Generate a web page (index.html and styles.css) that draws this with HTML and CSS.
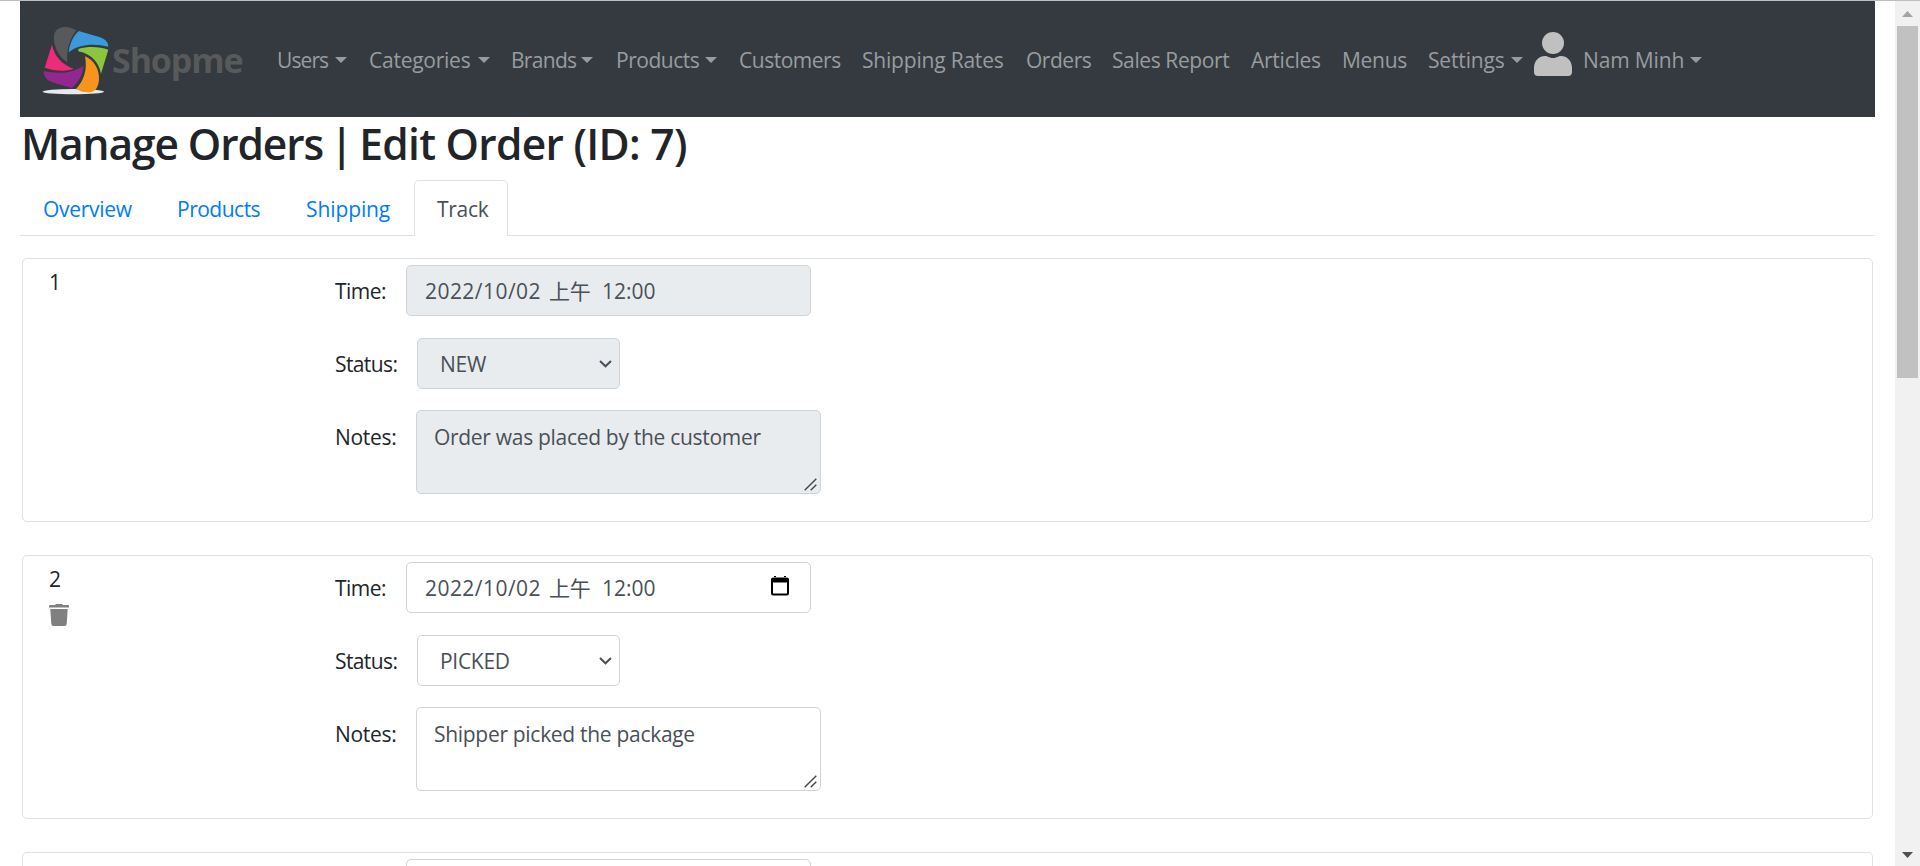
FILE: index.html
```html
<!DOCTYPE html>
<html lang="en">
<head>
<meta charset="utf-8">
<title>Manage Orders | Edit Order (ID: 7)</title>
<link rel="stylesheet" href="styles.css">
</head>
<body>
<div class="window">
<main class="page">
  <nav class="navbar">
    <a class="brand">
      <svg class="logo" viewBox="120 75 210 215" width="70" height="71.67">
        <ellipse cx="220" cy="275" rx="92" ry="8" fill="#e9e9eb"/>
        <path d="M229 91C208 80 192 78 178 85C158 94 160 116 165 136C171 158 183 174 202 187C199 151 207 120 229 91Z" fill="#58595b"/>
        <path d="M236 93L300 112C317 118 325 127 325 140C284 130 238 131 206 157C209 132 218 110 236 93Z" fill="#3b9ad9"/>
        <path d="M235 147C262 139 297 139 325 149L303 221C296 188 277 163 235 154Z" fill="#8cc63f"/>
        <path d="M255 169C282 180 299 208 297 240C294 269 281 278 263 277C250 277 238 273 228 267C251 243 263 211 255 169Z" fill="#f7941e"/>
        <path d="M250 197C250 222 237 244 216 264L161 248C139 241 131 230 131 213C178 223 219 219 250 197Z" fill="#92278f"/>
        <path d="M156 134C164 170 185 193 221 206C195 216 164 213 134 203Z" fill="#ee2a7b"/>
      </svg>
      <span class="brand-name">Shopme</span>
    </a>
    <ul class="menu">
      <li class="drop w-users"><span>Users</span></li>
      <li class="drop w-categories"><span>Categories</span></li>
      <li class="drop w-brands"><span>Brands</span></li>
      <li class="drop w-products"><span>Products</span></li>
      <li class="w-customers"><span>Customers</span></li>
      <li class="w-rates"><span>Shipping Rates</span></li>
      <li class="w-orders"><span>Orders</span></li>
      <li class="w-report"><span>Sales Report</span></li>
      <li class="w-articles"><span>Articles</span></li>
      <li class="w-menus"><span>Menus</span></li>
      <li class="drop w-settings"><span>Settings</span></li>
    </ul>
    <svg class="user-icon" viewBox="0 0 38 44" width="38" height="44"><ellipse cx="19" cy="11" rx="11" ry="11" fill="#c0c0c0"/><path d="M11 24C14 24 15 26 19 26S24 24 27 24C34 24 38 30 38 36V40Q38 44 34 44H4Q0 44 0 40V36C0 30 4 24 11 24Z" fill="#c0c0c0"/></svg>
    <ul class="menu"><li class="drop w-account"><span>Nam Minh</span></li></ul>
  </nav>

  <h2 class="title">Manage Orders <span class="pipe">|</span> <span class="subject">Edit Order (ID: 7)</span></h2>

  <div class="tabs">
    <a class="tab t-overview">Overview</a>
    <a class="tab t-products">Products</a>
    <a class="tab t-shipping">Shipping</a>
    <a class="tab t-track active">Track</a>
  </div>

  <section class="card">
    <div class="index"><span>1</span></div>
    <div class="fields">
      <div class="row"><label class="l-time">Time:</label><div class="control date off"><span class="day">2022/10/02</span><span class="half">上午</span><span class="clock">12:00</span></div></div>
      <div class="row"><label class="l-status">Status:</label><div class="control select off"><span>NEW</span><svg width="13" height="8" viewBox="0 0 13 8"><path d="M1 1L6.5 6.3L12 1" fill="none" stroke="#495057" stroke-width="2"/></svg></div></div>
      <div class="row"><label class="l-notes">Notes:</label><div class="control notes off"><span>Order was placed by the customer</span><svg class="grip" width="13" height="13" viewBox="0 0 13 13"><path d="M.7 12.3L12.3.7M6.7 12.3L12.3 6.7" stroke="#444" stroke-width="1.4"/></svg></div></div>
    </div>
  </section>

  <section class="card">
    <div class="index"><span>2</span>
      <svg class="trash" width="20" height="22" viewBox="0 0 20 22"><path d="M1 1H6Q6.5 0 7.5 0H12.500Q13.500 0 14 1H19Q20 1 20 2V3.500H0V2Q0 1 1 1ZM1.300 5H18.700L17.700 20Q17.500 22 15.600 22H4.400Q2.500 22 2.300 20Z" fill="#808080"/></svg>
    </div>
    <div class="fields">
      <div class="row"><label class="l-time">Time:</label><div class="control date"><span class="day">2022/10/02</span><span class="half">上午</span><span class="clock">12:00</span><svg class="calendar" width="18" height="20" viewBox="0 0 18 20"><path d="M2 1.500H16Q18 1.500 18 3.500V17.500Q18 19.500 16 19.500H2Q0 19.500 0 17.500V3.500Q0 1.500 2 1.500ZM2 6.500V17.500H16V6.500ZM3 0H5V2H3ZM13 0H15V2H13Z" fill-rule="evenodd" fill="#000"/></svg></div></div>
      <div class="row"><label class="l-status">Status:</label><div class="control select"><span>PICKED</span><svg width="13" height="8" viewBox="0 0 13 8"><path d="M1 1L6.5 6.3L12 1" fill="none" stroke="#495057" stroke-width="2"/></svg></div></div>
      <div class="row"><label class="l-notes">Notes:</label><div class="control notes"><span>Shipper picked the package</span><svg class="grip" width="13" height="13" viewBox="0 0 13 13"><path d="M.7 12.3L12.3.7M6.7 12.3L12.3 6.7" stroke="#444" stroke-width="1.4"/></svg></div></div>
    </div>
  </section>

  <section class="card">
    <div class="index"></div>
    <div class="fields"><div class="row"><label class="l-time"></label><div class="control date"></div></div></div>
  </section>
</main>
<aside class="scrollbar">
  <svg class="up" width="11" height="6" viewBox="0 0 11 6"><path d="M0 6L5.500 0L11 6Z" fill="#a3a3a3"/></svg>
  <div class="thumb"></div>
  <svg class="down" width="11" height="6" viewBox="0 0 11 6"><path d="M0 0H11L5.500 6Z" fill="#505050"/></svg>
</aside>
</div>
</body>
</html>
```
FILE: styles.css
```css
* { box-sizing: border-box; }
html { height: 100%; overflow: hidden; }
body {
  margin: 0;
  height: 866px;
  overflow: hidden;
  background: #fff;
  color: #212529;
  font: 21px/32px "Open Sans", "Noto Sans CJK TC", sans-serif;
  letter-spacing: -0.3px;
}
.window {
  display: flex;
  height: 866px;
  border-top: 1px solid #bfbfbf;
  overflow: hidden;
}
.page { width: 1855px; margin: 0 20px; flex: none; }

.navbar {
  display: flex;
  height: 116px;
  background: #343a40;
  color: #999c9f;
  letter-spacing: -0.48px;
  white-space: nowrap;
}
.brand { display: flex; width: 246px; padding: 24px 0 0 20px; }
.logo { flex: none; }
.brand-name {
  margin: 12px 0 0 2px;
  color: #58595b;
  font-size: 34px;
  font-weight: 700;
  line-height: 46px;
  letter-spacing: -1.1px;
}
.menu { display: flex; margin: 0; padding: 43px 0 0; list-style: none; }
.menu li { display: flex; justify-content: space-between; padding: 0 11px; }
.drop::after {
  content: "";
  margin-top: 13px;
  border: 6.5px solid transparent;
  border-top-color: currentColor;
  border-bottom: 0;
  height: 0;
}
.w-users { width: 92px; letter-spacing: -0.9px; }
.w-categories { width: 143px; letter-spacing: -0.25px; }
.w-brands { width: 104px; margin-left: -1px; margin-right: 1px; letter-spacing: -0.7px; }
.w-products { width: 123px; }
.w-customers { width: 123px; }
.w-rates { width: 164px; letter-spacing: -0.2px; }
.w-orders { width: 86px; }
.w-report { width: 139px; letter-spacing: -0.4px; }
.w-articles { width: 91px; letter-spacing: -0.25px; }
.w-menus { width: 86px; letter-spacing: -0.3px; }
.w-settings { width: 117px; letter-spacing: -0.15px; }
.w-account { width: 141px; letter-spacing: -0.15px; }
.user-icon { margin: 31px 0 0; flex: none; }

.title {
  height: 63px;
  margin: 0;
  padding: 1px 0 0 1px;
  font-size: 42.5px;
  font-weight: 600;
  line-height: 52px;
  letter-spacing: -1.1px;
  white-space: nowrap;
}
.pipe { margin: 0 -3px; }
.subject { letter-spacing: -0.7px; }
.tabs { display: flex; height: 56px; border-bottom: 1px solid #dee2e6; }
.tab { padding: 12px 0 0 22px; height: 56px; color: #007bff; border: 1px solid transparent; }
.t-overview { width: 134px; }
.t-products { width: 129px; letter-spacing: -0.5px; }
.t-shipping { width: 131px; letter-spacing: -0.1px; }
.t-track { width: 94px; padding-left: 22px; }
.active {
  color: #495057;
  border-color: #dee2e6 #dee2e6 #fff;
  border-radius: 5px 5px 0 0;
  background: #fff;
}

.card {
  display: flex;
  height: 264px;
  margin: 22px 2px 33px;
  border: 1px solid #dee2e6;
  border-radius: 5px;
}
.card + .card { margin-top: 0; }
.index { display: flex; flex-direction: column; width: 312px; padding: 7px 0 0 26px; }
.trash { margin-top: 9px; }
.fields { display: flex; flex-direction: column; gap: 22px; padding-top: 6px; }
.row { display: flex; }
.row label { padding-top: 10px; }
.l-time { width: 71px; letter-spacing: -0.5px; }
.l-status { width: 82px; letter-spacing: -0.6px; }
.l-notes { width: 81px; }
.control {
  display: flex;
  position: relative;
  height: 51px;
  padding-top: 9px;
  border: 1px solid #ced4da;
  border-radius: 5px;
  background: #fff;
  color: #495057;
  white-space: nowrap;
}
.control.off { background: #e9ecef; }
.date { width: 405px; padding-left: 18px; }
.day { width: 124px; letter-spacing: 0.45px; }
.half { width: 53px; }
.clock { letter-spacing: 0; }
.calendar { margin: 4px 21px 0 auto; }
.select { width: 203px; padding: 9px 7px 0 22px; justify-content: space-between; }
.select svg { margin-top: 12px; }
.notes { width: 405px; height: 84px; margin-top: -1px; padding: 10px 0 0 17px; }
.grip { position: absolute; right: 3px; bottom: 2px; }

.scrollbar {
  display: flex;
  flex-direction: column;
  align-items: center;
  width: 25px;
  height: 865px;
  padding: 10px 0 8px;
  background: #f1f1f1;
}
.thumb { width: 21px; height: 352px; margin-top: 9px; background: #c1c1c1; }
.down { margin-top: auto; }
```
